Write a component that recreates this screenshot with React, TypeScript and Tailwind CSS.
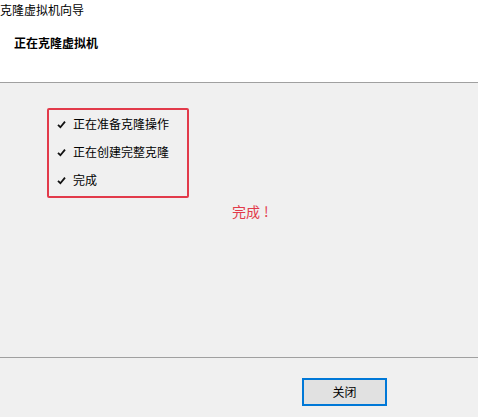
export default function App() {
  const steps = ["正在准备克隆操作", "正在创建完整克隆", "完成"];
  return (
    <div
      className="flex flex-col w-[478px] h-[417px] bg-[#f0f0f0] text-[12px] text-black overflow-hidden"
      style={{ fontFamily: '"Microsoft YaHei", "Noto Sans CJK SC", sans-serif' }}
    >
      {/* header */}
      <div className="h-[83px] shrink-0 bg-white border-b border-[#a0a0a0]">
        <div className="h-[20px] leading-[20px]">克隆虚拟机向导</div>
        <div className="pl-[14px] pt-[13px] font-bold leading-[20px]">正在克隆虚拟机</div>
      </div>

      {/* body */}
      <div className="h-[275px] shrink-0 border-b border-[#a0a0a0] pl-[47px] pt-[25px]">
        <div className="w-[142px] h-[90px] border-2 border-[#e23a4a] rounded-[2px] flex flex-col pt-[4px] pl-[8px] gap-[8px]">
          {steps.map((s) => (
            <div key={s} className="flex items-center h-[20px] leading-[20px]">
              <svg width="9" height="9" viewBox="0 0 9 9" className="mr-[7px]">
                <path d="M1 4.8 L3.4 7.2 L8 1.6" stroke="#111" strokeWidth="1.8" fill="none" />
              </svg>
              <span>{s}</span>
            </div>
          ))}
        </div>
        <div className="pl-[185px] pt-[2px] text-[14px] leading-[22px] text-[#e23a4a]">
          完成<span className="ml-[4px]">!</span>
        </div>
      </div>

      {/* footer */}
      <div className="flex-1 flex justify-end pr-[91px] pt-[20px]">
        <button className="w-[85px] h-[28px] border-2 border-[#0078d7] bg-[#e1e1e1] text-[12px]">
          关闭
        </button>
      </div>
    </div>
  );
}
